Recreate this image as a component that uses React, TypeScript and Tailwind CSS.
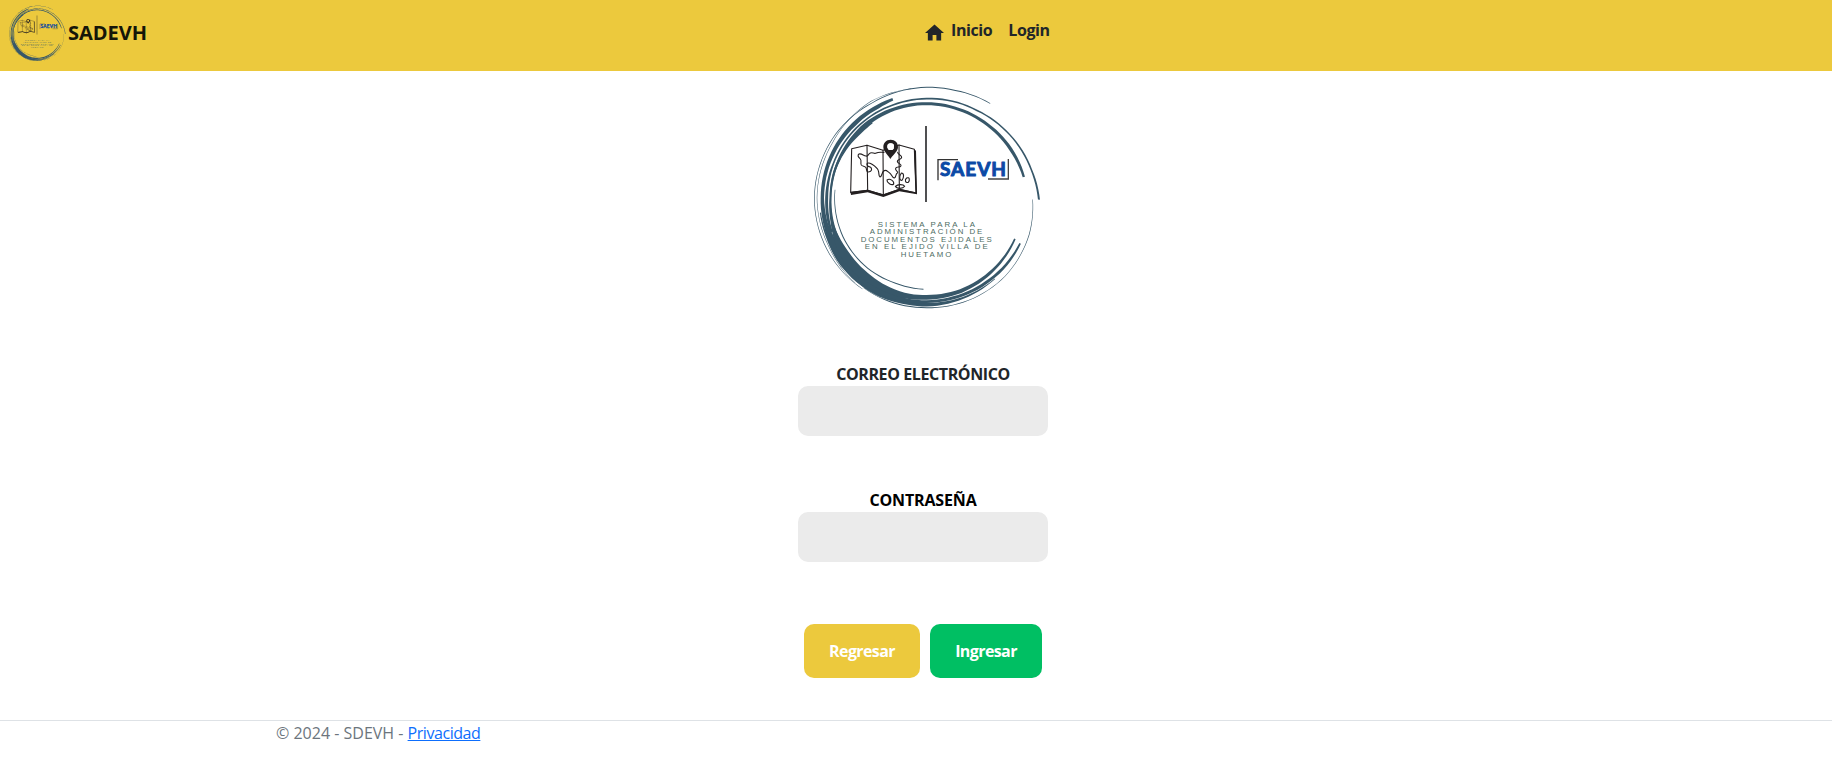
import React from "react";

const font = "font-['Open_Sans','Noto_Sans',sans-serif]";

// A brush stroke around the seal: [angle in degrees, radius, thickness] stops.
type Stop = [number, number, number];

const CX = 380;
const CY = 365;

function brush(stops: Stop[]): string {
  const outer: string[] = [];
  const inner: string[] = [];
  for (let i = 0; i < stops.length - 1; i++) {
    const [a0, r0, w0] = stops[i];
    const [a1, r1, w1] = stops[i + 1];
    const n = Math.max(4, Math.ceil(Math.abs(a1 - a0) / 3));
    for (let k = 0; k <= n; k++) {
      const t = k / n;
      const a = ((a0 + (a1 - a0) * t) * Math.PI) / 180;
      const r = r0 + (r1 - r0) * t;
      const w = (w0 + (w1 - w0) * t) / 2;
      outer.push(`${(CX + Math.cos(a) * (r + w)).toFixed(1)} ${(CY + Math.sin(a) * (r + w)).toFixed(1)}`);
      inner.push(`${(CX + Math.cos(a) * (r - w)).toFixed(1)} ${(CY + Math.sin(a) * (r - w)).toFixed(1)}`);
    }
  }
  return `M${outer.join("L")}L${inner.reverse().join("L")}Z`;
}

const strokes: Stop[][] = [
  [[304, 341, 2], [285, 333, 3], [270, 331, 3], [240, 328, 2.5], [215, 333, 2], [180, 337, 2], [150, 337, 2], [125, 335, 1]],
  [[262, 330, 1], [240, 334, 1.5], [210, 327, 1.5], [180, 329, 1.5], [155, 328, 1.5], [130, 334, 1]],
  [[361, 337, 6], [345, 325, 5], [320, 311, 4.5], [300, 302, 4.5], [270, 297, 5], [250, 296, 5], [225, 297, 5], [200, 298, 5], [180, 300, 9], [160, 304, 8]],
  [[348, 298, 7], [330, 291, 10], [310, 285, 9], [290, 282, 9], [270, 282, 9], [250, 283, 10], [230, 285, 13], [205, 287, 7], [180, 288, 5], [160, 292, 6], [140, 298, 16]],
  [[251, 312, 8], [242, 310, 12], [225, 310, 13], [200, 312, 11], [180, 313, 10], [165, 313, 14], [150, 311, 26], [135, 311, 34], [115, 315, 28], [100, 318, 17], [90, 321, 11], [70, 320, 6], [50, 318, 2]],
  [[234, 277, 3], [225, 280, 10], [208, 285, 8], [195, 288, 6], [180, 289, 5], [165, 294, 8], [145, 299, 28], [128, 300, 27], [112, 302, 22], [100, 301, 16], [90, 299, 14], [70, 298, 12], [50, 295, 9], [25, 292, 5]],
  [[26, 312, 5], [40, 312, 8], [55, 311, 9], [75, 311, 9], [90, 312, 8], [110, 315, 13], [130, 315, 10]],
  [[1, 318, 1.5], [20, 327, 2], [45, 333, 1.5], [65, 333, 1.5], [90, 330, 3], [110, 331, 3], [125, 330, 1]],
  [[92, 275, 2.5], [110, 273, 3], [130, 276, 3], [155, 277, 3], [185, 276, 2]],
  [[172, 322, 3], [158, 322, 5], [145, 326, 5], [130, 328, 3], [115, 328, 2]],
];

function Seal({ className }: { className: string }) {
  return (
    <svg className={className} viewBox="-6 0 750 720" aria-hidden="true">
      <g fill="#375769">
        {strokes.map((s, i) => (
          <path key={i} d={brush(s)} />
        ))}
      </g>
      <path d="M378 150V378" stroke="#2d2d2f" strokeWidth="5" />
      <g fill="none" stroke="#231f20" strokeWidth="3.3" strokeLinejoin="round" strokeLinecap="round">
        <path d="M155 218L201 208L249 223L297 207L343 220L349 351L298 340L250 357L203 343L152 350Z" />
        <path d="M201 208L203 343M249 223L250 357M297 207L298 340" />
        <path d="M177 234C186 232 190 239 198 240C205 242 204 234 211 231C219 228 222 235 229 231C236 227 243 229 252 229M177 234C170 240 178 245 181 249C186 255 180 261 184 267C188 272 194 270 198 275C201 281 198 288 205 288C214 288 217 281 213 275C208 270 202 274 201 266C200 259 208 260 216 265C224 270 232 275 235 284C238 291 235 301 240 303C246 302 245 290 251 285C259 279 262 287 269 291C275 294 275 305 283 306C289 305 286 294 292 291C297 287 284 284 287 277C290 270 300 276 303 269C304 262 293 264 292 256C292 249 303 252 305 244C306 237 293 237 293 229" />
        <path d="M261 312C270 306 283 315 281 324C275 330 260 320 261 312ZM286 331C293 324 310 324 314 331C309 339 290 339 286 331ZM304 291C313 291 312 306 306 313C298 315 297 301 304 291ZM320 306C329 302 330 313 325 319C316 322 313 312 320 306Z" />
      </g>
      <path d="M152 347L203 341L250 355L298 338L346 349L342 220L348 224L351 355L298 346L250 363L203 349L153 357Z" fill="#231f20" />
      <path d="M272 191C258 191 250 201 250 213C250 225 261 233 271 249C282 233 294 225 294 213C294 200 285 191 272 191ZM272 202A10 10 0 1 1 272 222A10 10 0 1 1 272 202Z" fill="#231f20" fillRule="evenodd" />
      <circle cx="272" cy="212" r="10" fill="currentColor" />
      <path d="M414 313V251H474" fill="none" stroke="#333" strokeWidth="4" />
      <path d="M625 249V309H564" fill="none" stroke="#444" strokeWidth="4" />
      <text
        x="420"
        y="299"
        textLength="198"
        lengthAdjust="spacing"
        fill="#0b4aa6"
        stroke="#0b4aa6"
        strokeWidth="3"
        strokeLinejoin="round"
        className="font-['Lato',sans-serif] text-[57px] font-bold"
      >
        SAEVH
      </text>
      <g fill="#4c6b62" className="font-['Liberation_Sans',sans-serif] text-[23.5px]">
        <text x="233" y="453" textLength="292">SISTEMA PARA LA</text>
        <text x="209" y="475" textLength="338">ADMINISTRACIÓN DE</text>
        <text x="182" y="498" textLength="393">DOCUMENTOS EJIDALES</text>
        <text x="194" y="520" textLength="369">EN EL EJIDO VILLA DE</text>
        <text x="302" y="543" textLength="152">HUETAMO</text>
      </g>
    </svg>
  );
}

function Field({ id, label, type, labelClass }: { id: string; label: string; type: string; labelClass: string }) {
  return (
    <div className="flex flex-col items-center">
      <label htmlFor={id} className={labelClass}>
        {label}
      </label>
      <input id={id} type={type} className="h-[50px] w-[250px] rounded-[10px] bg-[#ebebeb] px-4 outline-none" />
    </div>
  );
}

export default function App() {
  return (
    <div className={`min-h-[762px] bg-white text-base text-[#212529] ${font}`}>
      <header className="flex h-[71px] items-start bg-[#ecc93d]">
        <a href="#" className="flex w-[925px] items-start pl-[5px] text-[#ecc93d]">
          <Seal className="mt-[3px] h-[60px] w-[62.5px] shrink-0" />
          <span className="mt-[18px] ml-[0.5px] text-[20px] leading-[30px] font-bold text-[#151608]">SADEVH</span>
        </a>
        <nav className="flex items-start pt-[18px] leading-6 font-bold tracking-[-0.4px]">
          <svg className="mt-[6px] h-[17px] w-[19px]" viewBox="0 0 20 17" aria-hidden="true">
            <path d="M8 17V11H12V17H17V9H20L10 0L0 9H3V17Z" fill="#212529" />
          </svg>
          <a href="#" className="ml-[7px]">Inicio</a>
          <a href="#" className="ml-4">Login</a>
        </nav>
      </header>

      <main className="flex flex-col items-center pt-[5px] pl-[14px]">
        <Seal className="h-[240px] w-[250px] text-white" />
        <form className="flex flex-col items-center pt-[46px]">
          <Field id="correo" label="CORREO ELECTRÓNICO" type="email" labelClass="leading-6 font-bold tracking-[-0.4px]" />
          <div className="h-[52px]" />
          <Field id="clave" label="CONTRASEÑA" type="password" labelClass="leading-6 font-bold tracking-[-0.15px] text-black" />
          <div className="flex gap-[10px] pt-[62px] font-bold tracking-[-0.6px] text-white">
            <button type="button" className="h-[54px] w-[116px] rounded-[10px] bg-[#ecc93d]">Regresar</button>
            <button type="button" className="h-[54px] w-[112px] rounded-[10px] bg-[#00bf63]">Ingresar</button>
          </div>
        </form>
      </main>

      <footer className="mt-[42px] border-t border-[#dee2e6] pl-[276px] leading-6 text-[#6c757d]">
        © 2024 - SDEVH - <a href="#" className="tracking-[-0.45px] text-[#0d6efd] underline">Privacidad</a>
      </footer>
    </div>
  );
}
